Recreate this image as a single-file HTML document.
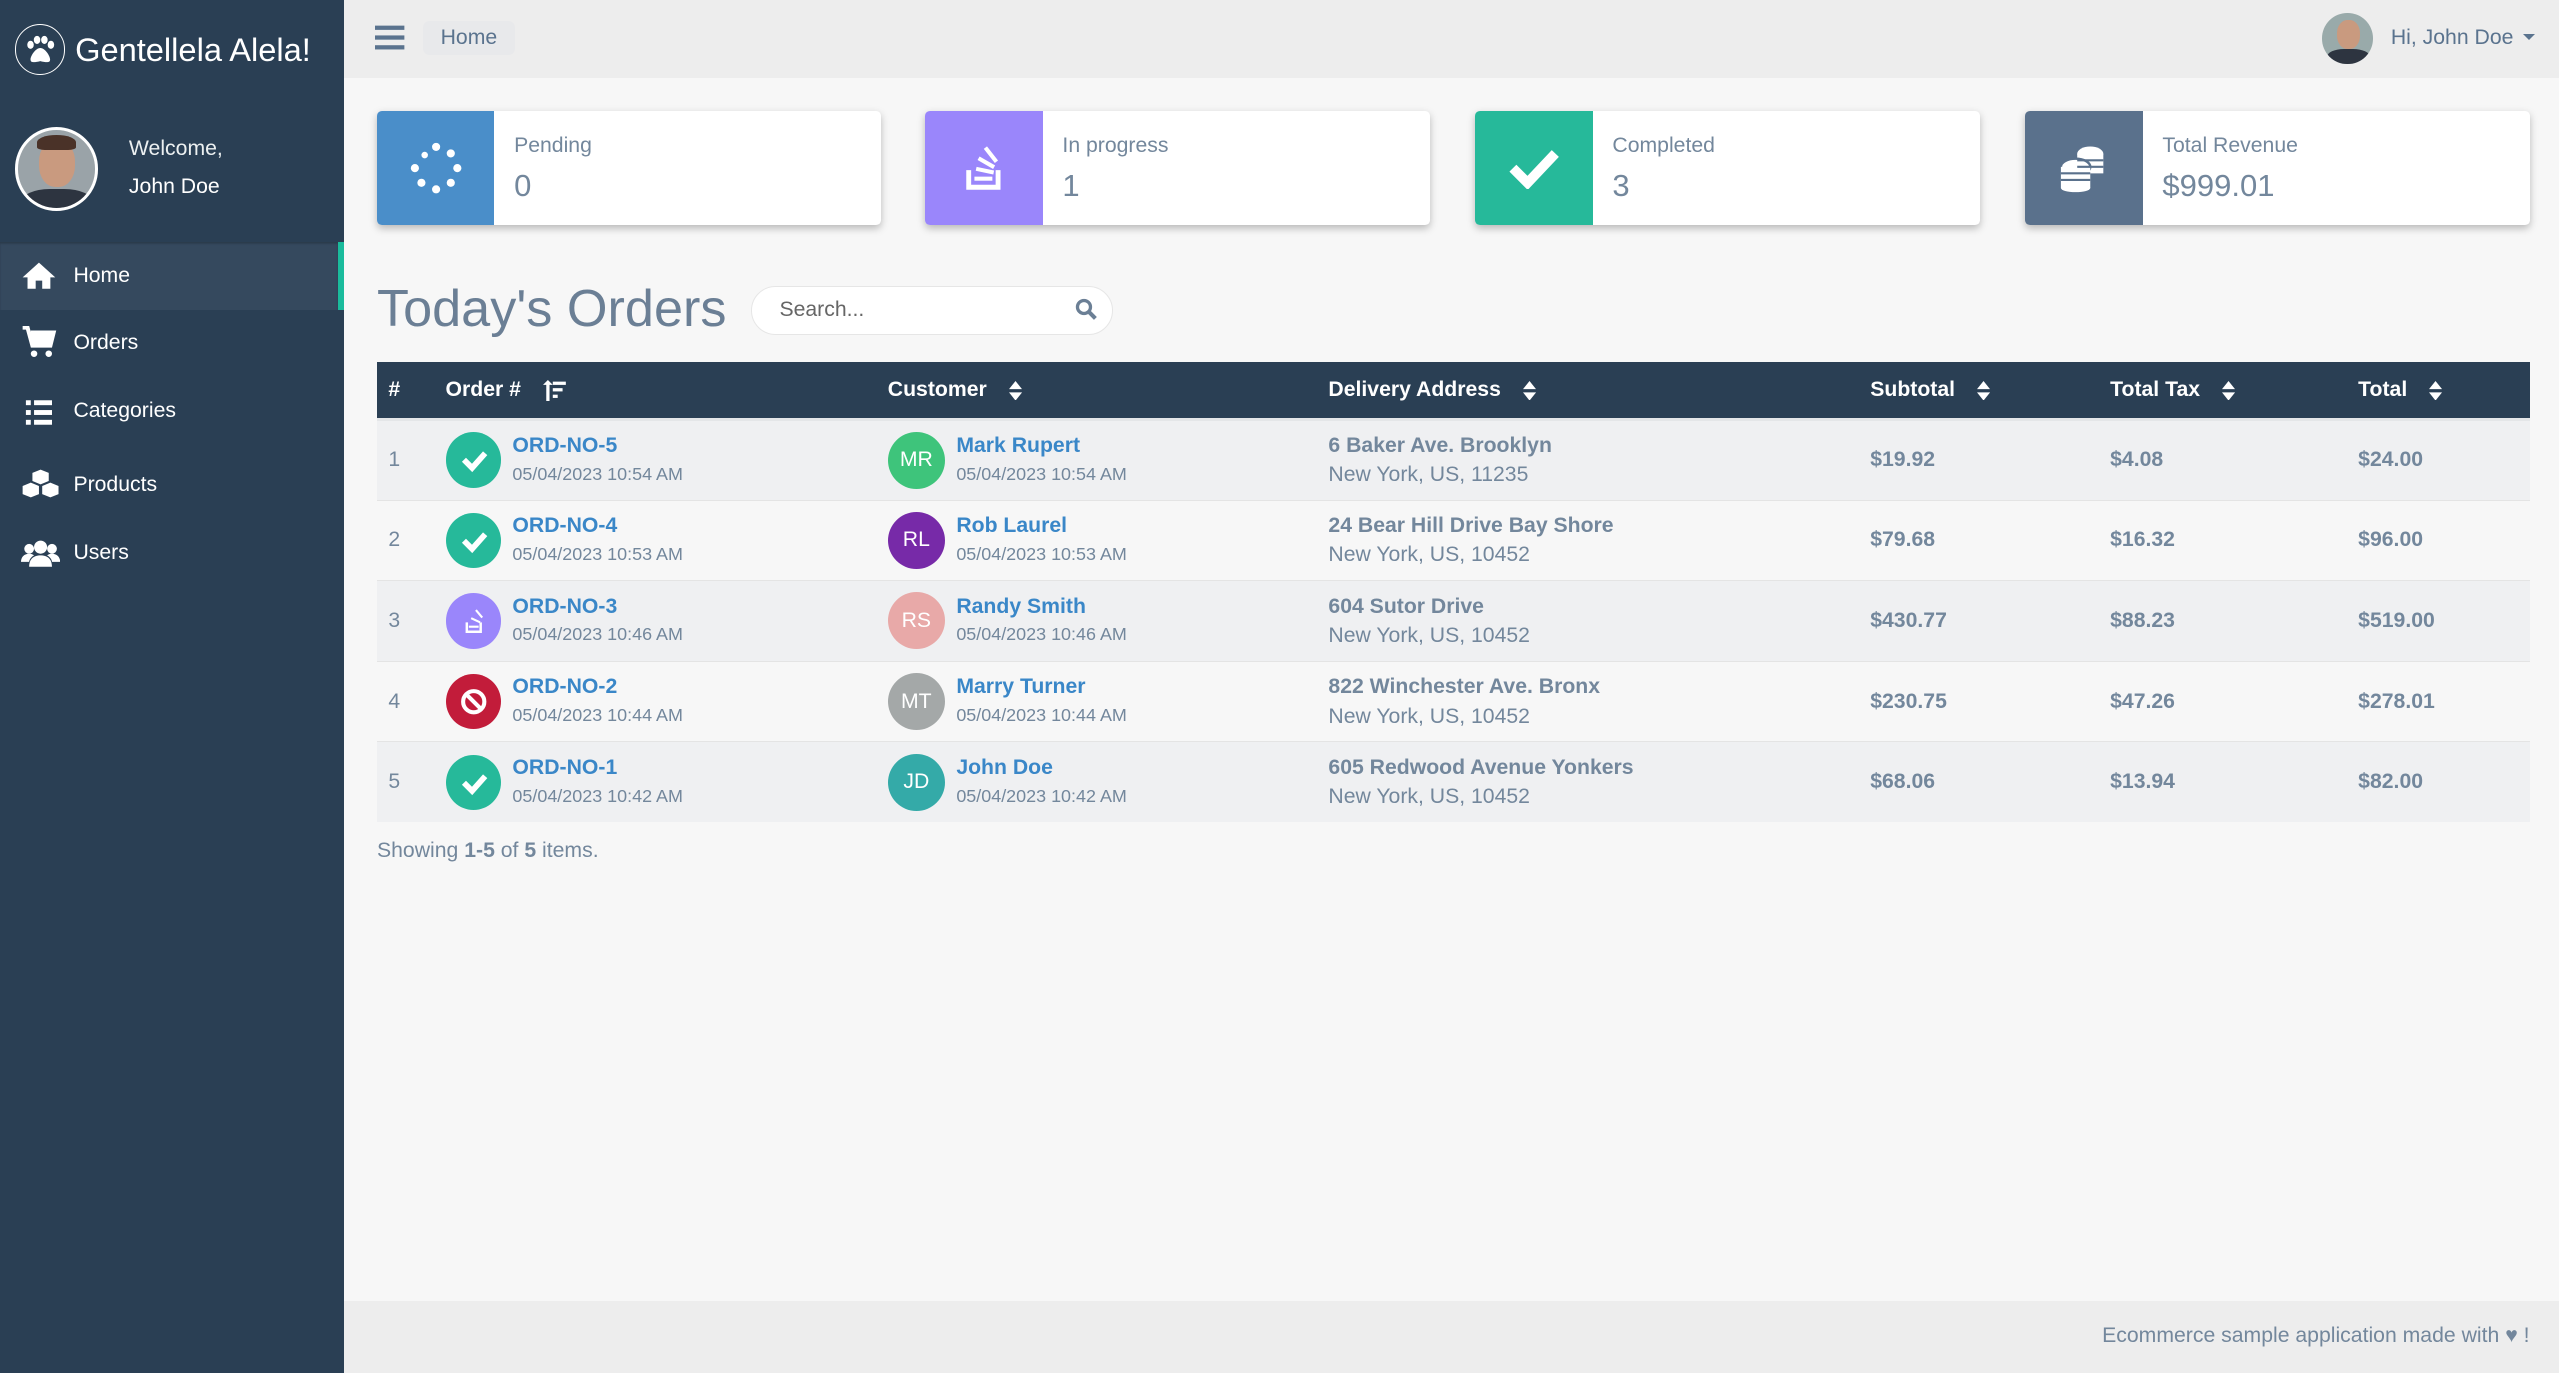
<!DOCTYPE html>
<html><head><meta charset="utf-8"><style>
*{box-sizing:border-box;margin:0;padding:0}
html,body{width:2559px;height:1373px;overflow:hidden;background:#f7f7f7}
#w{zoom:1.632;width:1568px;height:842px;position:relative;font-family:"Liberation Sans",sans-serif;color:#73879c;font-size:13px}
.abs{position:absolute}
#side{left:0;top:0;width:211px;height:842px;background:#2a3f54;color:#fff}
#top{left:211px;top:0;width:1357px;height:48px;background:#ededed}
#foot{left:211px;top:797px;width:1357px;height:45px;background:#ededed}
.card{position:absolute;top:68px;width:309px;height:70px;background:#fff;border-radius:3px;box-shadow:0 2px 5px rgba(0,0,0,.25);overflow:hidden}
.card .ic{position:absolute;left:0;top:0;width:72px;height:70px;display:flex;align-items:center;justify-content:center}
.card .l{position:absolute;left:84px;top:14px;font-size:13px}
.card .v{position:absolute;left:84px;top:35px;font-size:19px}
.menu{position:absolute;left:0;width:211px;height:42px;display:flex;align-items:center;font-size:13px}
.menu svg{position:absolute;left:13px}
.menu span{position:absolute;left:45px}
table{position:absolute;left:231px;top:222px;width:1319px;border-collapse:collapse}
th{background:#2a3f54;color:#fff;font-weight:bold;text-align:left;height:35px;font-size:13px;padding:0;border-bottom:2px solid #e4e6e8}
td{height:49.4px;padding:0;border-top:1px solid #e4e4e4;vertical-align:middle}
tr.o td{background:#eff0f2}tr.e td{background:#f7f7f7}
.st{display:inline-block;width:34px;height:34px;border-radius:50%;vertical-align:middle;position:relative}
.cell{display:flex;align-items:center}
.cell .t{margin-left:7px;line-height:17px}
a{color:#3a87c8;font-weight:bold;text-decoration:none;font-size:13px}
.d{font-size:11px}
.av{width:35px;height:35px;border-radius:50%;color:#fff;display:flex;align-items:center;justify-content:center;font-size:13px}
.b{font-weight:bold}
.sort{display:inline-block;margin-left:10px;vertical-align:middle}
</style></head><body><div id="w">
<div id="side" class="abs">
 <div class="abs" style="left:9px;top:15px;width:31px;height:31px;border:1px solid #fff;border-radius:50%;display:flex;align-items:center;justify-content:center">
  <svg width="20" height="18" viewBox="0 0 20 18"><ellipse cx="4" cy="6" rx="2" ry="2.5" fill="#fff"/><ellipse cx="8" cy="3" rx="2" ry="2.5" fill="#fff"/><ellipse cx="12.5" cy="3" rx="2" ry="2.5" fill="#fff"/><ellipse cx="16.5" cy="6" rx="2" ry="2.5" fill="#fff"/><path d="M10 8c-3 0-6 5-6 7s2 2 6 1c4 1 6 1 6-1s-3-7-6-7z" fill="#fff"/></svg>
 </div>
 <div class="abs" style="left:46px;top:19px;font-size:20px">Gentellela Alela!</div>
 <div class="abs" style="left:9px;top:78px;width:51px;height:51px;border-radius:50%;background:#9aa3a8;border:2px solid #fff;overflow:hidden">
  <div style="position:absolute;left:13px;top:6px;width:22px;height:29px;border-radius:45%;background:#c99a7f"></div>
  <div style="position:absolute;left:12px;top:3px;width:24px;height:9px;border-radius:50% 50% 20% 20%;background:#4a3228"></div>
  <div style="position:absolute;left:2px;top:36px;width:44px;height:20px;border-radius:40% 40% 0 0;background:#2d3440"></div>
 </div>
 <div class="abs" style="left:79px;top:84px;color:#ecf0f1;font-size:13px">Welcome,</div>
 <div class="abs" style="left:79px;top:107px;font-size:13px">John Doe</div>
 <div class="menu" style="top:148px;background:#35495e;border-right:4px solid #1abb9c;box-shadow:inset 0 1px 1px rgba(0,0,0,.2)">
  <svg width="22" height="18" viewBox="0 0 22 18"><path d="M11 1L1 10h3v7h5v-5h4v5h5v-7h3z" fill="#fff"/></svg><span>Home</span></div>
 <div class="menu" style="top:189px"><svg width="22" height="20" viewBox="0 0 22 20"><path d="M1 1h3l3 11h11l2-8H6" fill="none" stroke="#fff" stroke-width="2.5"/><rect x="6" y="4" width="13" height="8" fill="#fff"/><circle cx="8" cy="17" r="2" fill="#fff"/><circle cx="17" cy="17" r="2" fill="#fff"/></svg><span>Orders</span></div>
 <div class="menu" style="top:231px"><svg width="22" height="18" viewBox="0 0 22 18"><rect x="3" y="2" width="3" height="3" fill="#fff"/><rect x="8" y="2" width="11" height="3" fill="#fff"/><rect x="3" y="8" width="3" height="3" fill="#fff"/><rect x="8" y="8" width="11" height="3" fill="#fff"/><rect x="3" y="14" width="3" height="3" fill="#fff"/><rect x="8" y="14" width="11" height="3" fill="#fff"/></svg><span>Categories</span></div>
 <div class="menu" style="top:276px"><svg width="24" height="20" viewBox="0 0 24 20"><path d="M12 1l5 2v5l-5 2-5-2V3z M6 9l5 2v5l-5 2-5-2v-5z M18 9l5 2v5l-5 2-5-2v-5z" fill="#fff"/></svg><span>Products</span></div>
 <div class="menu" style="top:318px"><svg width="24" height="18" viewBox="0 0 24 18"><circle cx="12" cy="5" r="4" fill="#fff"/><circle cx="5" cy="6" r="3" fill="#fff"/><circle cx="19" cy="6" r="3" fill="#fff"/><path d="M5 17c0-5 3-7 7-7s7 2 7 7z M0 14c0-3 2-5 5-5 2 0 3 1 3 1-2 1-3 3-3 4z M24 14c0-3-2-5-5-5-2 0-3 1-3 1 2 1 3 3 3 4z" fill="#fff"/></svg><span>Users</span></div>
</div>
<div id="top" class="abs">
 <svg class="abs" style="left:19px;top:15px" width="18" height="16"><rect y="1" width="18" height="2.6" fill="#5a738e"/><rect y="7" width="18" height="2.6" fill="#5a738e"/><rect y="13" width="18" height="2.6" fill="#5a738e"/></svg>
 <div class="abs" style="left:48px;top:13px;padding:3px 11px;background:#e8e9eb;border-radius:4px;color:#5a738e;font-size:13px">Home</div>
 <div class="abs" style="left:1212px;top:8px;width:31px;height:31px;border-radius:50%;background:#9aa;overflow:hidden"><div style="position:absolute;left:9px;top:4px;width:14px;height:18px;border-radius:45%;background:#c99a7f"></div><div style="position:absolute;left:3px;top:22px;width:26px;height:12px;border-radius:40% 40% 0 0;background:#2d3440"></div></div>
 <div class="abs" style="left:1254px;top:16px;color:#5a738e;font-size:13px">Hi, John Doe</div>
 <div class="abs" style="left:1335px;top:21px;border:4px solid transparent;border-top:4px solid #5a738e"></div>
</div>
<div class="card" style="left:231px"><div class="ic" style="background:#4a8ec9"><svg width="32" height="32" viewBox="0 0 32 32" fill="#fff"><circle cx="16" cy="3" r="2.5"/><circle cx="25" cy="7" r="2.5"/><circle cx="29" cy="16" r="2.5"/><circle cx="25" cy="25" r="2.5"/><circle cx="16" cy="29" r="2.5"/><circle cx="7" cy="25" r="2.5"/><circle cx="3" cy="16" r="2.5"/><circle cx="9" cy="8" r="2"/></svg></div><div class="l">Pending</div><div class="v">0</div></div>
<div class="card" style="left:567px"><div class="ic" style="background:#9a86fb"><svg width="26" height="30" viewBox="0 0 26 30" fill="#fff"><path d="M2 16h3v9h15v-9h3v12H2z"/><rect x="7" y="20" width="11" height="2.5"/><rect x="8" y="15" width="11" height="2.5" transform="rotate(12 13 16)"/><rect x="9" y="10" width="11" height="2.5" transform="rotate(30 14 11)"/><rect x="12" y="5" width="11" height="2.5" transform="rotate(52 17 6)"/></svg></div><div class="l">In progress</div><div class="v">1</div></div>
<div class="card" style="left:904px"><div class="ic" style="background:#26b99a"><svg width="32" height="26" viewBox="0 0 32 26"><path d="M3 13l9 9L29 4" fill="none" stroke="#fff" stroke-width="6"/></svg></div><div class="l">Completed</div><div class="v">3</div></div>
<div class="card" style="left:1241px"><div class="ic" style="background:#5a718c"><svg width="34" height="30" viewBox="0 0 34 30" fill="#fff"><ellipse cx="21" cy="6" rx="8" ry="4.5"/><rect x="13" y="6" width="16" height="12"/><ellipse cx="12" cy="14" rx="9" ry="5" stroke="#5a718c" stroke-width="1.5"/><rect x="3" y="14" width="18" height="13"/><ellipse cx="12" cy="27" rx="9" ry="2.5"/><path d="M3 18h18M3 22h18M13 10h16M13 14h16" stroke="#5a718c" stroke-width="1.3"/></svg></div><div class="l">Total Revenue</div><div class="v">$999.01</div></div>
<div class="abs" style="left:231px;top:171px;font-size:32px;color:#6b7f95">Today's Orders</div>
<div class="abs" style="left:460px;top:175px;width:222px;height:30px;border:1px solid #e6e6e6;border-radius:15px;background:#fff"><span style="position:absolute;left:17px;top:7px;font-size:13px;color:#666">Search...</span><svg style="position:absolute;left:198px;top:7px" width="14" height="14" viewBox="0 0 14 14"><circle cx="5.5" cy="5.5" r="4" fill="none" stroke="#6b7f95" stroke-width="2"/><path d="M8.5 8.5l4 4" stroke="#6b7f95" stroke-width="2.5"/></svg></div>
<table>
<colgroup><col style="width:42px"><col style="width:271px"><col style="width:270px"><col style="width:332px"><col style="width:147px"><col style="width:152px"><col></colgroup>
<tr><th style="padding-left:7px">#</th><th>Order # <svg style="vertical-align:middle;margin-left:10px" width="14" height="13" viewBox="0 0 14 13" fill="#fff"><path d="M2 13V3H0l3-3 3 3H4v10z"/><rect x="6" y="1" width="8" height="2"/><rect x="6" y="5" width="6" height="2"/><rect x="6" y="9" width="3" height="2"/></svg></th>
<th>Customer <svg class="sort" width="8" height="12" viewBox="0 0 8 12" fill="#fff"><path d="M0 5L4 0l4 5zM0 7l4 5 4-5z"/></svg></th>
<th>Delivery Address <svg class="sort" width="8" height="12" viewBox="0 0 8 12" fill="#fff"><path d="M0 5L4 0l4 5zM0 7l4 5 4-5z"/></svg></th>
<th>Subtotal <svg class="sort" width="8" height="12" viewBox="0 0 8 12" fill="#fff"><path d="M0 5L4 0l4 5zM0 7l4 5 4-5z"/></svg></th>
<th>Total Tax <svg class="sort" width="8" height="12" viewBox="0 0 8 12" fill="#fff"><path d="M0 5L4 0l4 5zM0 7l4 5 4-5z"/></svg></th>
<th>Total <svg class="sort" width="8" height="12" viewBox="0 0 8 12" fill="#fff"><path d="M0 5L4 0l4 5zM0 7l4 5 4-5z"/></svg></th></tr>
<tr class="o"><td style="padding-left:7px">1</td><td><div class="cell"><span class="st" style="background:#26b99a"><svg width="34" height="34"><path d="M11 17l5 5 8-9" fill="none" stroke="#fff" stroke-width="3.5"/></svg></span><div class="t"><a>ORD-NO-5</a><br><span class="d">05/04/2023 10:54 AM</span></div></div></td><td><div class="cell"><div class="av" style="background:#3ec47b">MR</div><div class="t"><a>Mark Rupert</a><br><span class="d">05/04/2023 10:54 AM</span></div></div></td><td style="line-height:18px"><span class="b">6 Baker Ave. Brooklyn</span><br>New York, US, 11235</td><td class="b">$19.92</td><td class="b">$4.08</td><td class="b">$24.00</td></tr>
<tr class="e"><td style="padding-left:7px">2</td><td><div class="cell"><span class="st" style="background:#26b99a"><svg width="34" height="34"><path d="M11 17l5 5 8-9" fill="none" stroke="#fff" stroke-width="3.5"/></svg></span><div class="t"><a>ORD-NO-4</a><br><span class="d">05/04/2023 10:53 AM</span></div></div></td><td><div class="cell"><div class="av" style="background:#772aa8">RL</div><div class="t"><a>Rob Laurel</a><br><span class="d">05/04/2023 10:53 AM</span></div></div></td><td style="line-height:18px"><span class="b">24 Bear Hill Drive Bay Shore</span><br>New York, US, 10452</td><td class="b">$79.68</td><td class="b">$16.32</td><td class="b">$96.00</td></tr>
<tr class="o"><td style="padding-left:7px">3</td><td><div class="cell"><span class="st" style="background:#9a86fb"><svg width="34" height="34" fill="#fff"><path d="M12 18h1.5v5h7v-5H22v6.5H12z"/><rect x="14" y="20" width="6" height="1.3"/><rect x="15" y="16" width="6" height="1.3" transform="rotate(25 18 17)"/><rect x="17" y="12" width="6" height="1.3" transform="rotate(50 20 13)"/></svg></span><div class="t"><a>ORD-NO-3</a><br><span class="d">05/04/2023 10:46 AM</span></div></div></td><td><div class="cell"><div class="av" style="background:#e8a9a8">RS</div><div class="t"><a>Randy Smith</a><br><span class="d">05/04/2023 10:46 AM</span></div></div></td><td style="line-height:18px"><span class="b">604 Sutor Drive</span><br>New York, US, 10452</td><td class="b">$430.77</td><td class="b">$88.23</td><td class="b">$519.00</td></tr>
<tr class="e"><td style="padding-left:7px">4</td><td><div class="cell"><span class="st" style="background:#c21c3a"><svg width="34" height="34"><circle cx="17" cy="17" r="6.5" fill="none" stroke="#fff" stroke-width="2.5"/><path d="M12.5 12.5l9 9" stroke="#fff" stroke-width="2.5"/></svg></span><div class="t"><a>ORD-NO-2</a><br><span class="d">05/04/2023 10:44 AM</span></div></div></td><td><div class="cell"><div class="av" style="background:#a4a8a8">MT</div><div class="t"><a>Marry Turner</a><br><span class="d">05/04/2023 10:44 AM</span></div></div></td><td style="line-height:18px"><span class="b">822 Winchester Ave. Bronx</span><br>New York, US, 10452</td><td class="b">$230.75</td><td class="b">$47.26</td><td class="b">$278.01</td></tr>
<tr class="o"><td style="padding-left:7px">5</td><td><div class="cell"><span class="st" style="background:#26b99a"><svg width="34" height="34"><path d="M11 17l5 5 8-9" fill="none" stroke="#fff" stroke-width="3.5"/></svg></span><div class="t"><a>ORD-NO-1</a><br><span class="d">05/04/2023 10:42 AM</span></div></div></td><td><div class="cell"><div class="av" style="background:#34aaa8">JD</div><div class="t"><a>John Doe</a><br><span class="d">05/04/2023 10:42 AM</span></div></div></td><td style="line-height:18px"><span class="b">605 Redwood Avenue Yonkers</span><br>New York, US, 10452</td><td class="b">$68.06</td><td class="b">$13.94</td><td class="b">$82.00</td></tr>
</table>
<div class="abs" style="left:231px;top:514px;font-size:13px">Showing <b>1-5</b> of <b>5</b> items.</div>
<div id="foot" class="abs"><div class="abs" style="right:18px;top:14px;font-size:13px">Ecommerce sample application made with <span style="color:#73879c">♥</span> !</div></div>
</div></body></html>
